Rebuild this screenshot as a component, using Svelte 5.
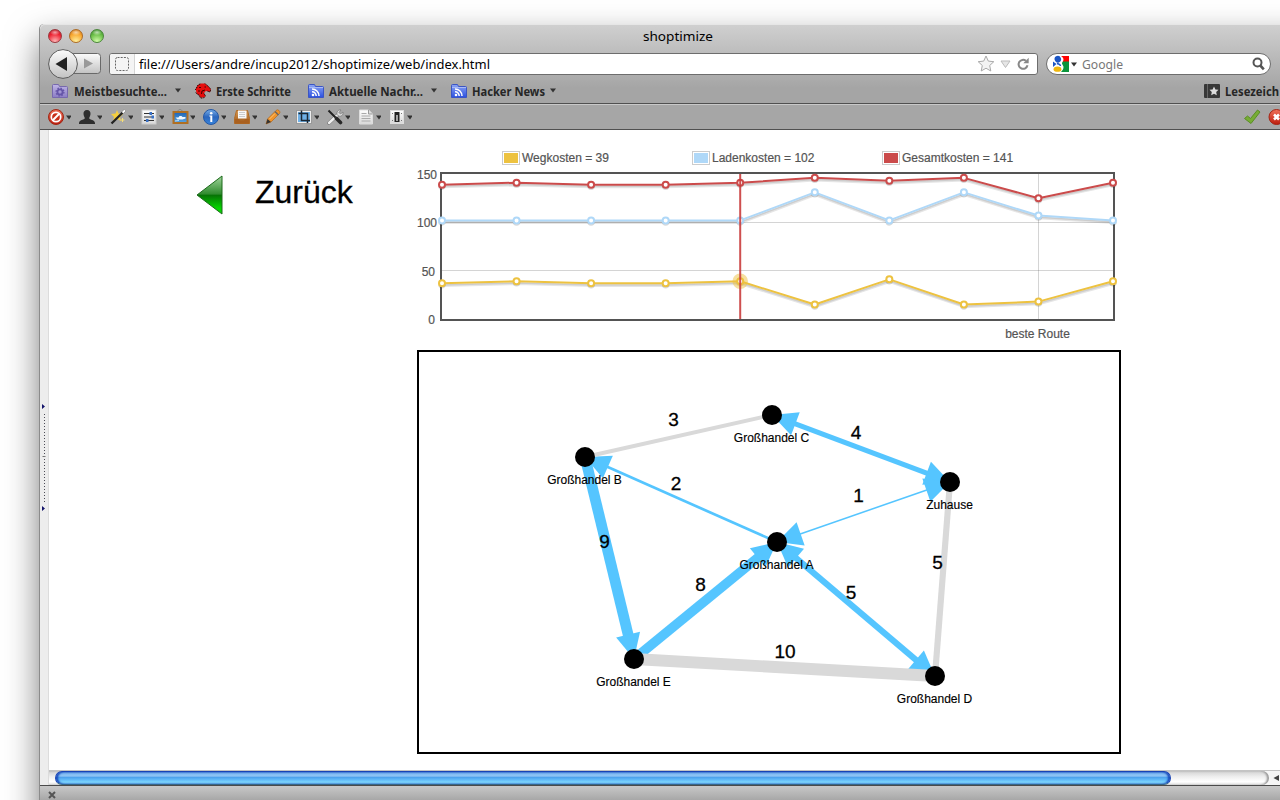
<script>
  const costs = [
    { name: 'Wegkosten = 39', color: '#edc240', values: [37, 39, 37, 37, 39, 15, 41, 15, 18, 39] },
    { name: 'Ladenkosten = 102', color: '#afd8f8', values: [102, 102, 102, 102, 102, 131, 102, 131, 107, 102] },
    { name: 'Gesamtkosten = 141', color: '#cb4b4b', values: [139, 141, 139, 139, 141, 146, 143, 146, 125, 141] }
  ];
  const px = (i) => 442 + (i * 671) / 9;
  const py = (v) => 319 - (v * 145) / 150;
  const line = (values) => values.map((v, i) => `${px(i)},${py(v)}`).join(' ');

  const nodes = {
    A: { x: 777, y: 542, name: 'Großhandel A' },
    B: { x: 585, y: 457, name: 'Großhandel B' },
    C: { x: 772, y: 415, name: 'Großhandel C' },
    D: { x: 935, y: 676, name: 'Großhandel D' },
    E: { x: 634, y: 659, name: 'Großhandel E' },
    Z: { x: 950, y: 482, name: 'Zuhause' }
  };
  const edges = [
    { a: 'C', b: 'Z', w: 4, heads: ['C', 'Z'], lx: 856, ly: 439 },
    { a: 'Z', b: 'A', w: 1, heads: ['Z', 'A'], lx: 858.5, ly: 502 },
    { a: 'A', b: 'B', w: 2, heads: ['B'], lx: 676, ly: 490 },
    { a: 'B', b: 'E', w: 9, heads: ['E'], lx: 604.5, ly: 548 },
    { a: 'E', b: 'A', w: 8, heads: ['A'], lx: 700.5, ly: 591 },
    { a: 'A', b: 'D', w: 5, heads: ['A', 'D'], lx: 851, ly: 599 },
    { a: 'B', b: 'C', w: 3, heads: [], lx: 673.5, ly: 426 },
    { a: 'Z', b: 'D', w: 5, heads: [], lx: 937.5, ly: 569 },
    { a: 'E', b: 'D', w: 10, heads: [], lx: 785, ly: 658 }
  ];

  function head(edge, at) {
    const p = nodes[at];
    const q = nodes[edge.a === at ? edge.b : edge.a];
    const d = Math.hypot(q.x - p.x, q.y - p.y);
    const ux = (q.x - p.x) / d;
    const uy = (q.y - p.y) / d;
    const bx = p.x + ux * 25;
    const by = p.y + uy * 25;
    return `${p.x},${p.y} ${bx - uy * 12.3},${by + ux * 12.3} ${bx + uy * 12.3},${by - ux * 12.3}`;
  }
  // Stop the shaft inside the head so that wide strokes do not pass the tip.
  function shaft(edge) {
    const p = nodes[edge.a];
    const q = nodes[edge.b];
    const d = Math.hypot(q.x - p.x, q.y - p.y);
    const ux = (q.x - p.x) / d;
    const uy = (q.y - p.y) / d;
    const s = edge.heads.includes(edge.a) ? 20 : 0;
    const e = edge.heads.includes(edge.b) ? 20 : 0;
    return { x1: p.x + ux * s, y1: p.y + uy * s, x2: q.x - ux * e, y2: q.y - uy * e };
  }

  const tools = ['disable', 'user', 'wand', 'sliders', 'image', 'info', 'tray', 'pencil', 'resize', 'tools', 'page', 'switch'];
</script>

{#snippet label(text, width, cls)}
  <svg class="label {cls}" {width} height="20"><text x="0" y="14.5" textLength={width} lengthAdjust="spacingAndGlyphs">{text}</text></svg>
{/snippet}

{#snippet caret()}
  <svg class="caret" width="6" height="5"><path d="M0 .5h6L3 4.5z" fill="#333" /></svg>
{/snippet}

{#snippet feed()}
  <svg class="icon" width="16" height="16">
    <path d="M.5 2.5q0-1 1-1h5l1 2h7q1 0 1 1v10H.5z" fill="url(#feedBlue)" stroke="#3b55c4" />
    <path d="M1 4.5h14" stroke="#a9baf5" />
    <circle cx="5" cy="12" r="1.3" fill="#fff" />
    <path d="M4 8.8a4 4 0 0 1 4.2 4.2M4 6a7 7 0 0 1 7 7" fill="none" stroke="#fff" stroke-width="1.5" />
  </svg>
{/snippet}

<svg class="defs" width="0" height="0">
  <defs>
    <linearGradient id="feedBlue" x2="0" y2="1"><stop offset="0" stop-color="#8ea6f4" /><stop offset="1" stop-color="#2b50e0" /></linearGradient>
    <linearGradient id="knob" x2="0" y2="1"><stop offset="0" stop-color="#fcfcfc" /><stop offset="1" stop-color="#c2c2c2" /></linearGradient>
    <linearGradient id="redBtn" x2="0" y2="1"><stop offset="0" stop-color="#f0725a" /><stop offset="1" stop-color="#bd1c0c" /></linearGradient>
    <linearGradient id="infoBlue" x2="0" y2="1"><stop offset="0" stop-color="#78aee8" /><stop offset=".5" stop-color="#2b66bd" /><stop offset="1" stop-color="#3a86dc" /></linearGradient>
    <linearGradient id="wood" x2="0" y2="1"><stop offset="0" stop-color="#d99a52" /><stop offset="1" stop-color="#9d5719" /></linearGradient>
    <linearGradient id="sky" x2="0" y2="1"><stop offset="0" stop-color="#1c62b4" /><stop offset="1" stop-color="#5aa6e4" /></linearGradient>
    <linearGradient id="violet" x2="0" y2="1"><stop offset="0" stop-color="#c0b6e6" /><stop offset="1" stop-color="#8b7cc4" /></linearGradient>
    <linearGradient id="green" x2="0" y2="1"><stop offset="0" stop-color="#a2d59d" /><stop offset=".48" stop-color="#2e8a2c" /><stop offset=".5" stop-color="#067204" /><stop offset=".85" stop-color="#05d600" /></linearGradient>
    <linearGradient id="paper" x2="0" y2="1"><stop offset="0" stop-color="#fff" /><stop offset="1" stop-color="#d8d8d8" /></linearGradient>
  </defs>
</svg>

<div class="desktop">
  <div class="window">
    <header class="titlebar">
      <div class="lights"><i class="red"></i><i class="amber"></i><i class="lime"></i></div>
      <div class="title">{@render label('shoptimize', 70, 'regular')}</div>
    </header>

    <nav class="navbar">
      <svg class="history" width="56" height="32">
        <rect x="20" y="5.5" width="32.5" height="20" rx="3" fill="url(#knob)" stroke="#696969" />
        <path d="M36 10.500v10l9-5z" fill="#999" />
        <circle cx="15" cy="16" r="14.400" fill="url(#knob)" stroke="#5b5b5b" />
        <path d="M19 9v14L7.500 16z" fill="#222" />
      </svg>
      <div class="url">
        <svg width="29" height="20"><path d="M0 0h24.500v20H0z" fill="#f4f4f4" /><path d="M24.500 0v20" stroke="#d5d5d5" /><rect x="5.500" y="3.500" width="13" height="13" rx="2" fill="none" stroke="#666" stroke-dasharray="2 1.200" /></svg>
        {@render label('file:///Users/andre/incup2012/shoptimize/web/index.html', 351, 'regular')}
        <svg class="urlicons" width="54" height="20">
          <path d="M9 2l2.300 5.100 5.500.6-4.100 3.800 1.100 5.500L9 14.200 4.200 17l1.100-5.500L1.200 7.700l5.500-.6z" fill="#f3f3f3" stroke="#aaa" />
          <path d="M24 7h9l-4.500 6.500z" fill="#e6e6e6" stroke="#bbb" />
          <path d="M50.500 11.300a4.500 4.500 0 1 1-1.600-4.500" fill="none" stroke="#888" stroke-width="2" /><path d="M51.700 3.800v5.400h-5.400z" fill="#888" />
        </svg>
      </div>
      <div class="search">
        <svg width="18" height="18">
          <path d="M9 1h8v6H9z" fill="#f00" /><path d="M9 6.500h8V17H8z" fill="#0a943b" />
          <path d="M1 6.500l3.500 2.500L1 12z" fill="#1b55c4" />
          <path d="M9 1c3 2 3 4 1.500 6s1 3 1 5-1 3.500-2.500 5H6V1z" fill="#fff" />
          <ellipse cx="5.800" cy="4.200" rx="3.200" ry="3.400" fill="#1b55c4" transform="rotate(-20 5.800 4.200)" />
          <path d="M5 8.500c2 .5 3.500 1 3.500 2.500" fill="none" stroke="#1b55c4" stroke-width="1.300" />
          <ellipse cx="5.500" cy="14.200" rx="3.900" ry="2.600" fill="#efb70e" />
        </svg>
        {@render caret()}
        {@render label('Google', 41, 'regular muted')}
        <svg class="lens" width="14" height="16"><circle cx="5.500" cy="6.500" r="4" fill="none" stroke="#555" stroke-width="2" /><path d="M8.300 9.500l3.500 3.800" stroke="#555" stroke-width="2.600" /></svg>
      </div>
    </nav>

    <div class="bookmarks">
      <svg class="icon" width="16" height="16">
        <path d="M.5 2.500q0-1 1-1h5l1 2h7q1 0 1 1v10H.5z" fill="url(#violet)" stroke="#7769ad" />
        <circle cx="8" cy="9" r="2.600" fill="none" stroke="#6555a8" stroke-width="1.800" /><circle cx="8" cy="9" r="3.900" fill="none" stroke="#6555a8" stroke-width="1.300" stroke-dasharray="1.500 1.560" />
      </svg>
      <span style:margin-left="6px">{@render label('Meistbesuchte...', 93, 'bold')}</span>
      <span style:margin-left="8px">{@render caret()}</span>
      <svg class="icon" style:margin-left="14px" width="16" height="16">
        <path d="M1 5l2-3 3-1.500h4l1.500 1.500 2 1.500L16 6.500 15 9l-3-1-2 .500-1 2 1.500 2.500-1.500 1.500H5.500L4 12l-2-1-1-3z" fill="#e60d0d" />
        <path d="M0 7l1.500-2L3 2l3-1.500M10 .5l1.500 1.500 2 1.500L16 6.500 15 9l-3-1M9 10.500l1.500 2.500-2 2H5.500L4 12 2 11 .5 9" fill="none" stroke="#2b0000" stroke-dasharray="1.500 .8" />
        <path d="M9.500 4h1.500M4 4.500h2M3 8h2M6.500 11l.5-3 3-1" stroke="#400" fill="none" />
      </svg>
      <span style:margin-left="5px">{@render label('Erste Schritte', 75, 'bold')}</span>
      <span style:margin-left="17px">{@render feed()}</span>
      <span style:margin-left="5px">{@render label('Aktuelle Nachr...', 94, 'bold')}</span>
      <span style:margin-left="8px">{@render caret()}</span>
      <span style:margin-left="14px">{@render feed()}</span>
      <span style:margin-left="5px">{@render label('Hacker News', 73, 'bold')}</span>
      <span style:margin-left="5px">{@render caret()}</span>
      <div class="saved">
        <svg class="icon" width="16" height="16"><rect y="1" width="16" height="14" rx="1" fill="#383838" /><path d="M3.500 1v14" stroke="#666" /><path d="M10 3.500l1.400 2.900 3.100.4-2.300 2.200.6 3.200-2.800-1.500-2.800 1.500.6-3.200-2.300-2.200 3.100-.4z" fill="#ddd" /></svg>
        {@render label('Lesezeich', 54, 'bold')}
      </div>
    </div>

    <div class="devbar">
      {#each tools as tool}
        <div class="tool">
          <svg width="17" height="16">
            {#if tool === 'disable'}
              <circle cx="8" cy="8" r="7.500" fill="url(#redBtn)" stroke="#a02715" /><circle cx="8" cy="8" r="4.700" fill="#c8301a" stroke="#fff" stroke-width="1.700" /><path d="M4.800 11.200l6.400-6.400" stroke="#fff" stroke-width="2" />
            {:else if tool === 'user'}
              <path d="M8 1c2.500 0 3.700 1.700 3.500 4-.1 2-1.200 3-1.300 4.300.2 1.500 5.300 1.300 5.800 4.700v1H0v-1c.5-3.400 5.600-3.200 5.800-4.700C5.700 8 4.600 7 4.500 5 4.300 2.700 5.500 1 8 1z" fill="#2e2e2e" />
            {:else if tool === 'wand'}
              <path d="M7 1l1.500 3.500L13 5l-3 3 1 4-4-2-4 2 1-4-3-3 4.500-.5z" fill="#f5cf3f" /><path d="M1.500 14.500L15 1.200" stroke="#222" stroke-width="2.300" /><path d="M12.500 3.700l2.500-2.500" stroke="#fff" stroke-width="2" /><path d="M12.500 9v4M10.500 11h4" stroke="#f7df78" />
            {:else if tool === 'sliders'}
              <rect x="1" y="1" width="14" height="14" fill="url(#paper)" stroke="#ccc" /><path d="M3 4.500h10M3 8h10M3 11.500h10" stroke="#333" stroke-width="1.200" /><path d="M8.500 3h2.500v3H8.500zM10.500 6.500H13v3h-2.500zM5 10h2.500v3H5z" fill="#3770c8" />
            {:else if tool === 'image'}
              <path d="M5 2.500L8 0l3 2.500" fill="none" stroke="#888" /><rect x="1.500" y="3" width="14" height="11" fill="url(#sky)" stroke="#b06f22" stroke-width="2" /><path d="M3.500 8.500h3l1-1.500h2l1 1h3v1.500l-3 1h-5z" fill="#f2f8fd" /><path d="M3 12l4-.500" stroke="#bfe0f8" />
            {:else if tool === 'info'}
              <circle cx="8" cy="8" r="7.500" fill="url(#infoBlue)" stroke="#2457a4" /><path d="M6.300 6.500h3v6.500h-2V7.500h-1z" fill="#fff" /><circle cx="8.200" cy="4.200" r="1.300" fill="#fff" />
            {:else if tool === 'tray'}
              <path d="M2.500 1.500h11l2 8v5H.5v-5z" fill="url(#wood)" stroke="#b06b26" /><path d="M4 1.500h8.500v8H4z" fill="#f8f8f8" /><path d="M5 3.500h6M5 5.500h6M5 7.500h6" stroke="#ccc" /><path d="M1 10h4l1 2h4l1-2h4v4.500H1z" fill="#a9601f" />
            {:else if tool === 'pencil'}
              <path d="M1 15l1.500-5L11 1.500q1.500-1.500 3 0l.5.5q1 1 0 2.500L6 13z" fill="#ef942c" stroke="#b8681a" stroke-width=".7" /><path d="M1 15l1.500-5L6 13z" fill="#333" /><path d="M10 2.500L13.500 6" stroke="#666" stroke-width="1.500" /><path d="M4.500 10L10 4.500" stroke="#ffc673" />
            {:else if tool === 'resize'}
              <rect x=".5" y="1.500" width="15" height="13" fill="#eee" stroke="#999" /><rect x="2" y="3" width="12" height="10" fill="#6fb0e6" /><path d="M5.500 1.500v10H14M2.500 4.500h9V14" fill="none" stroke="#1b2733" stroke-width="1.500" />
            {:else if tool === 'tools'}
              <path d="M2 14L10 6.500" stroke="#777" stroke-width="3.600" stroke-linecap="round" /><path d="M2 14L10 6.500" stroke="#eee" stroke-width="2.400" stroke-linecap="round" /><path d="M10 5.500c-.5-3 1.500-5 4-4.500L12 3.500l1.500 1.500L16 3c.5 3-2 5-4.500 4z" fill="#ddd" stroke="#777" stroke-width=".7" /><path d="M1.500 1.500l7 7" stroke="#222" stroke-width="2" /><path d="M9.500 9.500l4 4" stroke="#282828" stroke-width="3.600" stroke-linecap="round" />
            {:else if tool === 'page'}
              <path d="M1.500 1h9l4 4v10h-13z" fill="url(#paper)" stroke="#ddd" /><path d="M10.500 1v4h4" fill="#ddd" stroke="#999" /><path d="M3.500 4.500h5M3.500 7h9M3.500 9.500h9M3.500 12h9" stroke="#aaa" />
            {:else}
              <rect x="1.500" y="1.500" width="13" height="13" fill="url(#paper)" stroke="#ddd" /><path d="M5.500 3h5v10h-5z" fill="#222" /><path d="M7.300 6h1.400v6H7.300z" fill="#ddd" /><path d="M3.500 4v1M3.500 11v1M12.500 4v1M12.500 11v1" stroke="#777" />
            {/if}
          </svg>
          {@render caret()}
        </div>
      {/each}
      <svg class="status" width="42" height="18">
        <path d="M.5 10.500l3-2.500 3 2.500L13.500 2l2.500 2L7 15.500z" fill="#77ad35" stroke="#5a8d26" />
        <circle cx="32.500" cy="9" r="7.500" fill="url(#redBtn)" stroke="#a42414" /><path d="M30 6.500l5 5M35 6.500l-5 5" stroke="#fff" stroke-width="2.500" />
      </svg>
    </div>

    <div class="body">
      <aside class="splitter">
        <svg width="8" height="640"><path d="M2 274v5l3-2.500zM2 376v5l3-2.500z" fill="#15156b" /><path d="M4.500 284v88" stroke="#4b4b55" stroke-dasharray="1 2" /><path d="M2.500 326.500h3" stroke="#777" /></svg>
      </aside>
      <div class="view">
        <main class="page">
          <a class="back" href="#zurueck">
            <svg width="28" height="42"><path d="M1 21L26 2v38z" fill="url(#green)" stroke="#1c6a1b" stroke-linejoin="round" /></svg>
            <span>Zurück</span>
          </a>
          <section class="results">
            <div class="legend">
              {#each costs as cost}
                <div class="key"><i style:background-color={cost.color}></i>{cost.name}</div>
              {/each}
            </div>
            <svg class="plot" width="716" height="180" viewBox="415 168 716 180">
              <g stroke="#545454" stroke-opacity=".25"><path d="M442 222.500h671M442 270.500h671M1038.500 174v145" /></g>
              <rect x="441" y="173" width="673" height="147" fill="none" stroke="#545454" stroke-width="2" />
              {#each costs as cost}
                <g fill="none" stroke-linejoin="round">
                  <polyline points={line(cost.values)} transform="translate(.3 2.200)" stroke="#000" stroke-opacity=".1" stroke-width="3" />
                  <polyline points={line(cost.values)} transform="translate(.2 1.700)" stroke="#000" stroke-opacity=".1" stroke-width="1.500" />
                  <polyline points={line(cost.values)} stroke={cost.color} stroke-width="2" />
                </g>
                {#each cost.values as v, i}
                  <path d="M{px(i) - 3} {py(v) + 1.500}a3 3 0 0 0 6 0" fill="none" stroke="#000" stroke-opacity=".15" stroke-width="1.500" />
                  <circle cx={px(i)} cy={py(v)} r="3" fill="#fff" stroke={cost.color} stroke-width="2" />
                {/each}
              {/each}
              <circle cx={px(4)} cy={py(39)} r="5" fill="none" stroke="#edc240" stroke-opacity=".5" stroke-width="5.500" />
              <path d="M740.200 174v145" stroke="#c93c3c" stroke-opacity=".9" stroke-width="2" />
              <g class="axis">
                <text x="437" y="179" text-anchor="end">150</text>
                <text x="437" y="227" text-anchor="end">100</text>
                <text x="435" y="276" text-anchor="end">50</text>
                <text x="435" y="324" text-anchor="end">0</text>
                <text x="1037.500" y="338" text-anchor="middle">beste Route</text>
              </g>
            </svg>
            <div class="map">
              <svg width="700" height="400" viewBox="419 352 700 400">
                {#each edges as edge}
                  {@const color = edge.heads.length ? '#55c5ff' : '#d9d9d9'}
                  <line {...shaft(edge)} stroke={color} stroke-width={edge.w * 1.15 + 0.4} />
                  {#each edge.heads as at}<polygon points={head(edge, at)} fill={color} />{/each}
                {/each}
                {#each Object.values(nodes) as n}
                  <circle cx={n.x} cy={n.y} r="10" />
                  <text class="place" x={n.x - 0.5} y={n.y + 27} text-anchor="middle">{n.name}</text>
                {/each}
                {#each edges as edge}<text class="weight" x={edge.lx} y={edge.ly} text-anchor="middle">{edge.w}</text>{/each}
              </svg>
            </div>
          </section>
        </main>
        <div class="scroll">
          <div class="track"><div class="thumb"></div></div>
          <svg width="10" height="14"><path d="M10 4v6L4.500 7z" fill="#444" /></svg>
        </div>
      </div>
    </div>

    <footer><svg width="8" height="8"><path d="M1 1l6 6M7 1L1 7" stroke="#555" stroke-width="2" /></svg></footer>
  </div>
</div>

<style>
  :global(body) { background: #fff; overflow: hidden; }
  .defs { position: absolute; }
  svg { display: block; flex: none; }
  .desktop { box-sizing: border-box; width: 1280px; height: 800px; padding: 24px 0 0 40px; overflow: hidden; background: #fff; }
  .window { display: flex; flex-direction: column; width: 1300px; height: 860px; border-radius: 5px 0 0 0; background: linear-gradient(#d0d0d0, #a5a5a5 64px, #a5a5a5); box-shadow: -1px 0 0 #8b8b8b, inset 0 1px 0 #e6e6e6, 0 16px 34px rgba(0, 0, 0, .55); }
  .label { font: 13px "Noto Sans", sans-serif; overflow: visible; fill: #000; }
  .label.bold { font-size: 12px; font-weight: 700; fill: #262626; }
  .label.muted { fill: #777; }
  .titlebar { display: flex; align-items: center; height: 24px; padding-left: 8px; }
  .lights { display: flex; gap: 7px; }
  .lights i { box-sizing: border-box; width: 14px; height: 14px; border-radius: 50%; border: 1px solid #99373d; background: radial-gradient(ellipse 5px 3px at 50% 20%, #fff9, transparent), radial-gradient(circle at 50% 95%, #ffb9b9, #ee2434 60%, #b20d1b); }
  .lights .amber { border-color: #ad6b25; background: radial-gradient(ellipse 5px 3px at 50% 20%, #fff9, transparent), radial-gradient(circle at 50% 95%, #fff2a0, #f8a72f 60%, #c46a12); }
  .lights .lime { border-color: #4a873a; background: radial-gradient(ellipse 5px 3px at 50% 20%, #fff9, transparent), radial-gradient(circle at 50% 95%, #d4ffac, #68bd45 60%, #358526); }
  .title { margin-left: 539px; }
  .navbar { display: flex; align-items: center; height: 32px; padding-left: 8px; }
  .url { box-sizing: border-box; display: flex; align-items: center; width: 929px; height: 22px; margin-left: 5px; border: 1px solid #6d6d6d; border-radius: 3px; background: #fff; overflow: hidden; }
  .urlicons { margin-left: auto; margin-right: 6px; }
  .search { box-sizing: border-box; display: flex; align-items: center; width: 225px; height: 22px; margin-left: 8px; padding: 0 4px 0 5px; border: 1px solid #6d6d6d; border-radius: 11px; background: #fff; }
  .search :global(.caret) { margin: 0 5px 0 1px; }
  .lens { margin-left: auto; }
  .bookmarks { box-sizing: border-box; display: flex; align-items: center; height: 24px; padding: 0 0 2px 12px; border-bottom: 1px solid #505050; }
  .saved { display: flex; gap: 5px; margin-left: auto; margin-right: 61px; }
  .saved .icon { margin-top: 2px; }
  .devbar { box-sizing: border-box; display: flex; align-items: center; height: 26px; padding-left: 8px; border-top: 1px solid #c9c9c9; border-bottom: 1px solid #505050; background: #a6a6a6; }
  .tool { display: flex; align-items: center; width: 31px; }
  .tool .caret { margin-left: 1px; width: 5px; height: 5px; }
  .status { margin-left: auto; margin-right: 54px; }
  .body { display: flex; height: 655px; background: #fff; }
  .splitter { box-sizing: border-box; width: 9px; background: #ededed; border-right: 1px solid #dcdcdc; }
  .view { flex: 1; display: flex; flex-direction: column; }
  .page { display: flex; align-items: flex-start; height: 640px; padding-left: 147px; font-family: "Liberation Sans", sans-serif; }
  .back { display: flex; align-items: center; gap: 31px; width: 219px; margin-top: 44px; color: #000; font-size: 32px; line-height: 42px; text-decoration: none; -webkit-text-stroke: .3px #000; }
  .back span { margin-top: -7px; }
  .results { width: 716px; }
  .legend { display: flex; margin: 20px 0 0 87px; }
  .key { display: flex; align-items: center; gap: 2px; width: 190px; height: 16px; font-size: 12px; color: #545454; white-space: nowrap; -webkit-text-stroke: .2px #545454; }
  .key i { width: 14px; height: 10px; padding: 1px; border: 1px solid #ccc; background-clip: content-box; }
  .plot { margin-top: 2px; overflow: visible; }
  .axis { font-size: 12px; fill: #545454; stroke: #545454; stroke-width: .2px; }
  .map { box-sizing: border-box; width: 704px; height: 404px; margin: 2px 0 0 2px; border: 2px solid #000; }
  .place { font-size: 12px; stroke: #000; stroke-width: .15px; }
  .weight { font-size: 19px; stroke: #000; stroke-width: .3px; }
  .scroll { box-sizing: border-box; display: flex; height: 15px; border-top: 1px solid #c4c4c4; background: #f6f6f6; }
  .track { box-sizing: border-box; width: 1220px; height: 14px; padding-left: 6px; border-radius: 0 8px 8px 0; background: linear-gradient(#d2d2d2, #eee 40%, #fff 75%, #e7e7e7); box-shadow: inset -2px 0 2px #999; }
  .thumb { box-sizing: border-box; width: 1116px; height: 14px; border: 1px solid #1843b5; border-bottom-color: #376585; border-radius: 7px; background: linear-gradient(#75b4f1, #91c6f5 35%, #499eeb 42%, #62bbf8 65%, #91eaff); box-shadow: inset 2px 0 2px #1748bb, inset -2px 0 2px #1748bb; }
  footer { display: flex; align-items: flex-start; flex: 1; padding: 5px 0 0 8px; border-top: 1px solid #4b4b4b; background: linear-gradient(#c8c8c8, #a5a5a5 15px); }
</style>
